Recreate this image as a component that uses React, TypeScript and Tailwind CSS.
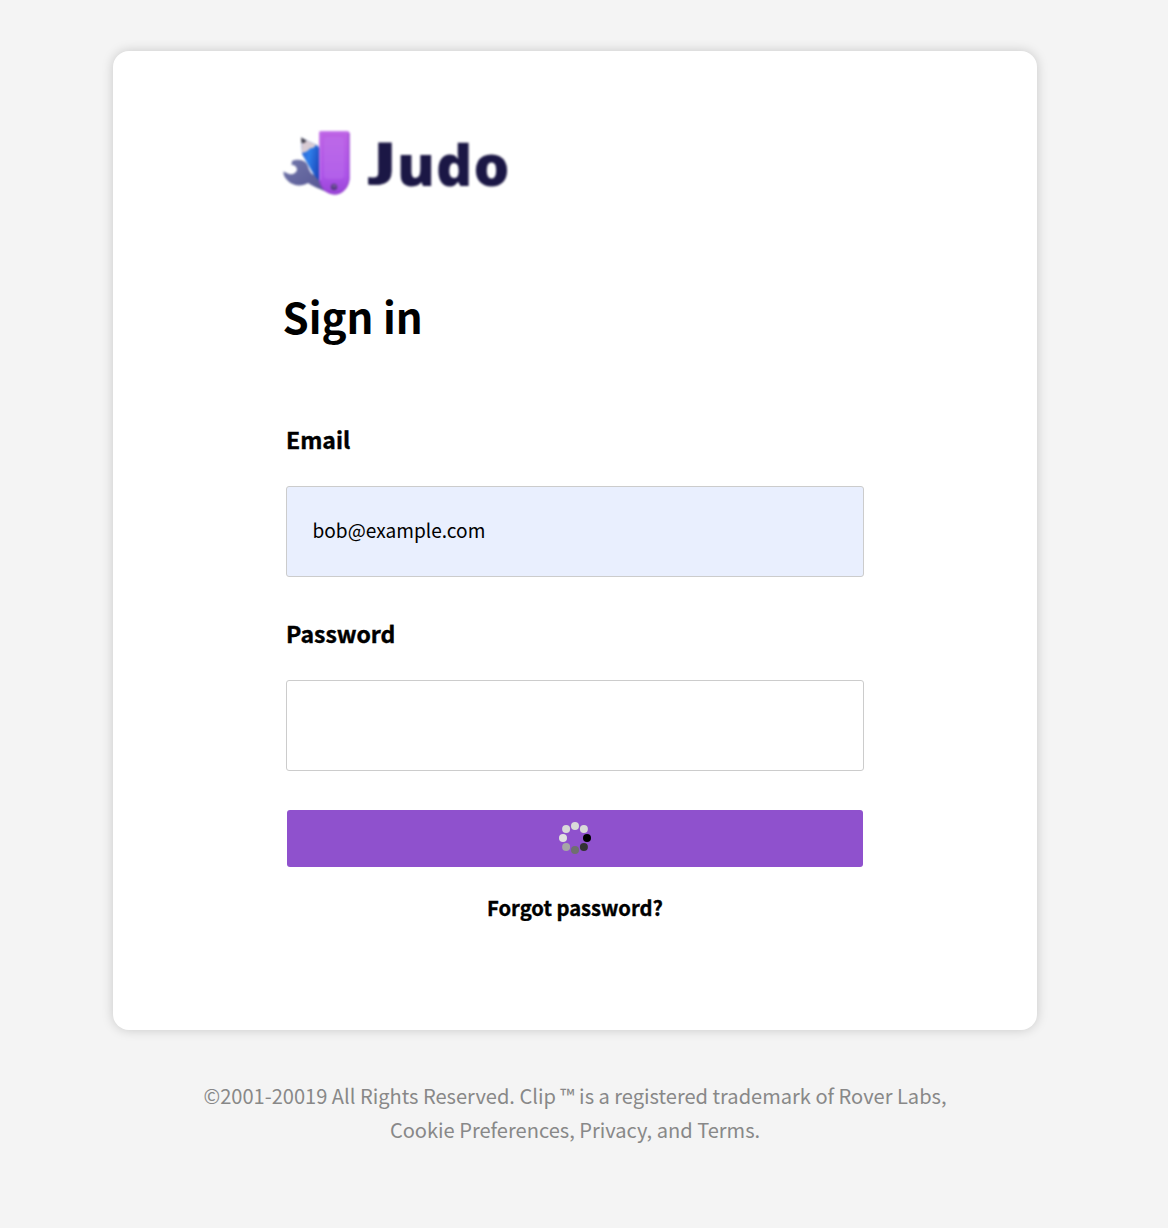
import React from "react";

const dots = [
  { x: 16, y: 4, fill: "#d9d9d9" },
  { x: 24.9, y: 7.1, fill: "#d9d9d9" },
  { x: 28, y: 16, fill: "#000000" },
  { x: 24.9, y: 25, fill: "#333333" },
  { x: 16, y: 28, fill: "#6f6f6f" },
  { x: 7.1, y: 25, fill: "#a6a6a6" },
  { x: 4, y: 16, fill: "#e0e0e0" },
  { x: 7.1, y: 7.1, fill: "#d9d9d9" },
];

function Spinner() {
  return (
    <svg width="32" height="32" viewBox="0 0 32 32" className="block">
      {dots.map((d) => (
        <circle key={`${d.x}-${d.y}`} cx={d.x} cy={d.y} r="4" fill={d.fill} />
      ))}
    </svg>
  );
}

function LogoMark() {
  return (
    <svg width="72" height="70" viewBox="0 0 72 70" className="block shrink-0 blur-[0.8px]">
      <defs>
        <linearGradient id="blade" x1="0" y1="0" x2="0" y2="1">
          <stop offset="0" stopColor="#bd62e4" />
          <stop offset="0.7" stopColor="#ac54e8" />
          <stop offset="1" stopColor="#9a44d8" />
        </linearGradient>
        <linearGradient id="pencil" x1="0" y1="0.3" x2="1" y2="0.7">
          <stop offset="0" stopColor="#2c62d0" />
          <stop offset="0.4" stopColor="#2f7fea" />
          <stop offset="1" stopColor="#1945b8" />
        </linearGradient>
        <linearGradient id="wrench" x1="0" y1="0" x2="1" y2="1">
          <stop offset="0" stopColor="#7378ab" />
          <stop offset="1" stopColor="#535391" />
        </linearGradient>
      </defs>
      <path
        d="M10 32 C14 30 22 30 25 35 C27 39 27 42 30 45 L42 50 L46 63 C39 61 31 57 26 54 C20 58 11 57 6 52 C3 49 1 46 1.5 42.5 L7 45 C11 46 14 44 15 41 C15 38 13 36 9.5 36 Z"
        fill="url(#wrench)"
      />
      <path d="M19 8.5 L35 16 L38 20 V53 L32 46 L20 25 Z" fill="url(#pencil)" />
      <path d="M19 8.5 L35 16 C33 16 32 20 29 19 C27 20 26 23 20 24 Z" fill="#d8cbd3" />
      <path d="M19 8.5 L24.5 11.5 L22.5 14 L19.5 14 Z" fill="#45434f" />
      <path d="M37 4 Q37 2 39 2 H65 Q67.5 2 67.5 5 V50 C67 58 61 65.5 53 65.5 C45 65.5 38 60 37 51 Z" fill="url(#blade)" />
      <path d="M38 51 V3 H66" stroke="#ca82ed" strokeWidth="1" fill="none" />
      <path d="M67 4 V50 C66.5 58 60 65 53 65 C46 65 39 60 38 52" stroke="#8d3bc8" strokeWidth="1" fill="none" />
      <rect x="42" y="8" width="20" height="42" rx="4" fill="#c078ee" opacity="0.35" />
      <circle cx="52" cy="58" r="3.2" fill="#583b86" />
      <path d="M50.5 56.5 Q52 58 54 56.5" stroke="#9b85b8" fill="none" />
    </svg>
  );
}

function Wordmark() {
  return (
    <span className="ml-[21px] flex pt-px font-['Open_Sans'] text-[56.5px] font-extrabold leading-[70px] text-[#1b1745] blur-[0.8px]">
      <span className="mr-[2px] inline-block origin-[50%_8px] scale-x-[1.12] scale-y-[0.78] [-webkit-text-stroke:1px_#1b1745]">J</span>
      <span className="tracking-[1.2px]">udo</span>
    </span>
  );
}

function Field({ label, value }: { label: string; value?: string }) {
  return (
    <label className="block">
      <span className="block h-[64px] text-[23px] font-bold leading-[34px] [-webkit-text-stroke:0.4px_black]">{label}</span>
      <input
        readOnly
        defaultValue={value}
        className={`block h-[91px] w-[578px] rounded-[3px] border border-[#cccccc] px-[25.5px] pb-[4px] text-[19.1px] outline-none ${value ? "bg-[#e9effe]" : "bg-white"}`}
      />
    </label>
  );
}

export default function App() {
  return (
    <main className="min-h-[1228px] bg-[#f4f4f4] pt-[51px] font-['Noto_Sans_CJK_SC',sans-serif] text-black">
      <section className="ml-[113px] h-[979px] w-[924px] rounded-[16px] bg-white pl-[173px] shadow-[0_0_12px_rgba(0,0,0,0.18)]">
        <div className="-ml-[4px] flex h-[225px] items-start pt-[78px]">
          <LogoMark />
          <Wordmark />
        </div>
        <h1 className="-ml-[3.5px] h-[146px] text-[42px] font-bold leading-[80px]">Sign in</h1>
        <form className="w-[578px]">
          <Field label="Email" value="bob@example.com" />
          <div className="h-[39px]" />
          <Field label="Password" />
          <button type="button" className="ml-px mt-[39px] flex h-[57px] w-[576px] items-center justify-center rounded-[3px] bg-[#8f51cd] pb-px">
            <Spinner />
          </button>
          <a href="#" className="mt-[23px] block text-center text-[20.2px] font-bold leading-[36px] [-webkit-text-stroke:0.35px_black]">Forgot password?</a>
        </form>
      </section>
      <footer className="ml-[113px] mt-[49px] w-[924px] text-center text-[20.07px] leading-[34px] text-[#888888]">
        <p>©2001-20019 All Rights Reserved. Clip ™ is a registered trademark of Rover Labs,</p>
        <p>Cookie Preferences, Privacy, and Terms.</p>
      </footer>
    </main>
  );
}
